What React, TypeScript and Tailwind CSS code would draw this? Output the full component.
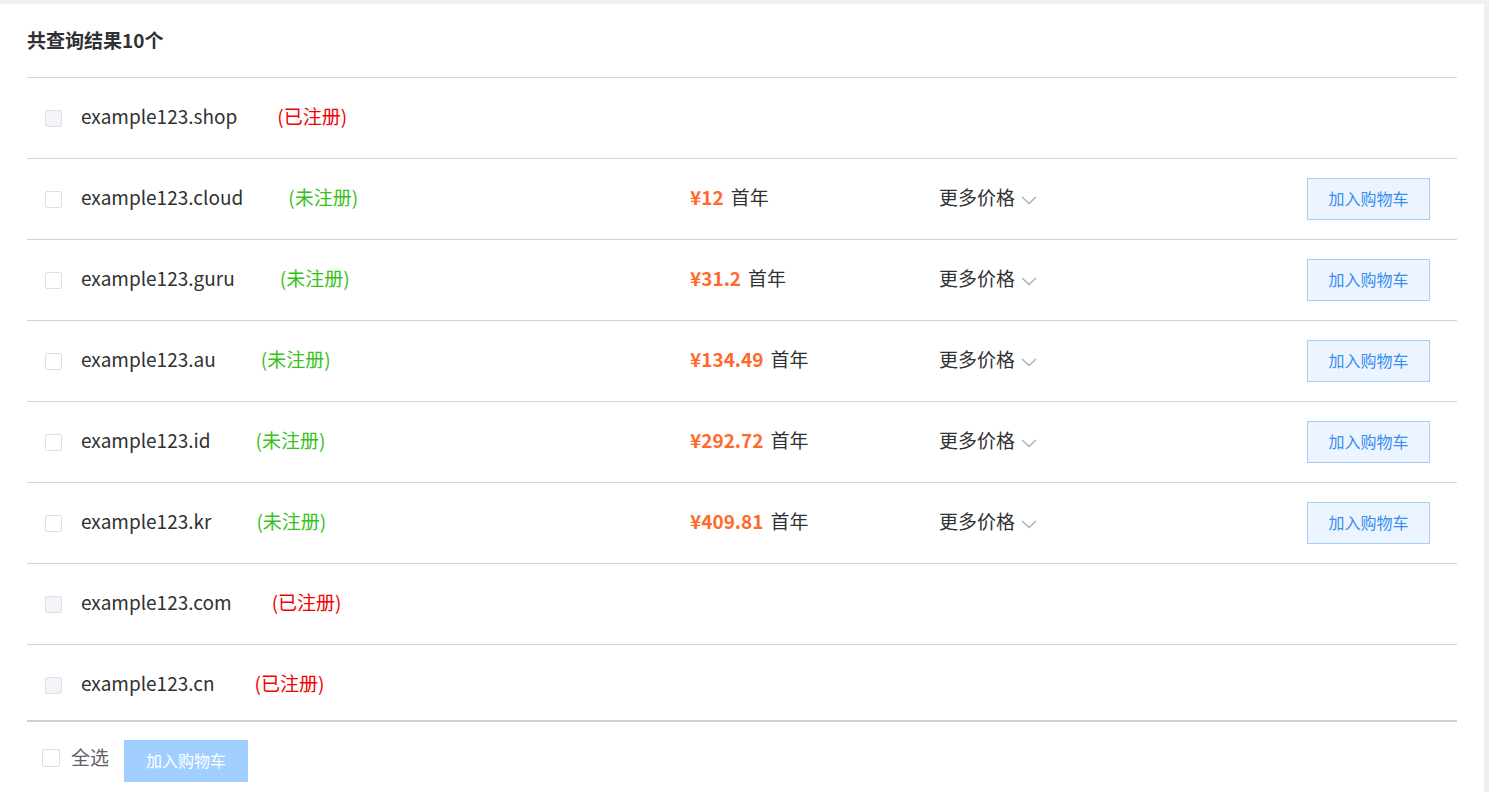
import React from "react";

type Row = {
  name: string;
  registered: boolean;
  price?: string;
};

const rows: Row[] = [
  { name: "example123.shop", registered: true },
  { name: "example123.cloud", registered: false, price: "¥12" },
  { name: "example123.guru", registered: false, price: "¥31.2" },
  { name: "example123.au", registered: false, price: "¥134.49" },
  { name: "example123.id", registered: false, price: "¥292.72" },
  { name: "example123.kr", registered: false, price: "¥409.81" },
  { name: "example123.com", registered: true },
  { name: "example123.cn", registered: true },
];

const font = {
  fontFamily: '"Noto Sans CJK SC", "Noto Sans", sans-serif',
};

function Chevron() {
  return (
    <svg width="16" height="9" viewBox="0 0 16 9" className="ml-[6px] mt-[5px]">
      <path d="M1 1 L8 7.5 L15 1" fill="none" stroke="#b0b0b0" strokeWidth="1.4" />
    </svg>
  );
}

function DomainRow({ row, last }: { row: Row; last: boolean }) {
  return (
    <div
      className={
        last
          ? "flex h-[75px] items-center pt-[5px]"
          : "flex h-[81px] items-center border-b border-[#d4d4d4]"
      }
    >
      <div className="flex w-[663px] items-center pl-[18px]">
        <span
          className={
            row.registered
              ? "h-[17px] w-[17px] rounded-[2px] border border-[#dcdfe6] bg-[#f2f4f8]"
              : "h-[17px] w-[17px] rounded-[2px] border border-[#dcdfe6] bg-white"
          }
        />
        <span className="mb-[3px] ml-[19px] text-[19px] text-[#303133]">{row.name}</span>
        {row.registered ? (
          <span className="mb-[3px] ml-[40px] text-[19px] text-[#f00000]">(已注册)</span>
        ) : (
          <span className="mb-[3px] ml-[45px] text-[19px] text-[#36c21a]">(未注册)</span>
        )}
      </div>
      {row.price && (
        <>
          <div className="mb-[3px] flex w-[249px] items-center text-[19px]">
            <span className="font-bold text-[#ff6a2c]">{row.price}</span>
            <span className="ml-[7px] text-[#303133]">首年</span>
          </div>
          <div className="mb-[3px] flex flex-1 items-center text-[19px] text-[#303133]">
            更多价格
            <Chevron />
          </div>
          <button className="mb-[1px] mr-[27px] h-[42px] w-[123px] border border-[#a8cdf8] bg-[#ebf4ff] pb-[2px] text-[16px] text-[#3a8ef0]">
            加入购物车
          </button>
        </>
      )}
    </div>
  );
}

export default function App() {
  return (
    <div className="h-[792px] overflow-hidden bg-[#eef0f4] pt-[4px] pr-[5px]" style={font}>
      <div className="h-full bg-white px-[27px]">
        <div className="flex h-[74px] items-center border-b border-[#d4d4d4] pb-[1px]">
          <h1 className="text-[19px] font-bold text-[#303133]">共查询结果10个</h1>
        </div>
        {rows.map((r, i) => (
          <DomainRow key={r.name} row={r} last={i === rows.length - 1} />
        ))}
        <div className="flex items-center border-t-2 border-[#d0d0d0] pt-[18px]">
          <span className="ml-[15px] mb-[6px] h-[18px] w-[18px] rounded-[2px] border border-[#dcdfe6] bg-white" />
          <span className="ml-[11px] mb-[8px] text-[19px] text-[#606266]">全选</span>
          <button className="ml-[15px] h-[42px] w-[124px] bg-[#a0cfff] pb-[2px] text-[16px] text-white">
            加入购物车
          </button>
        </div>
      </div>
    </div>
  );
}
